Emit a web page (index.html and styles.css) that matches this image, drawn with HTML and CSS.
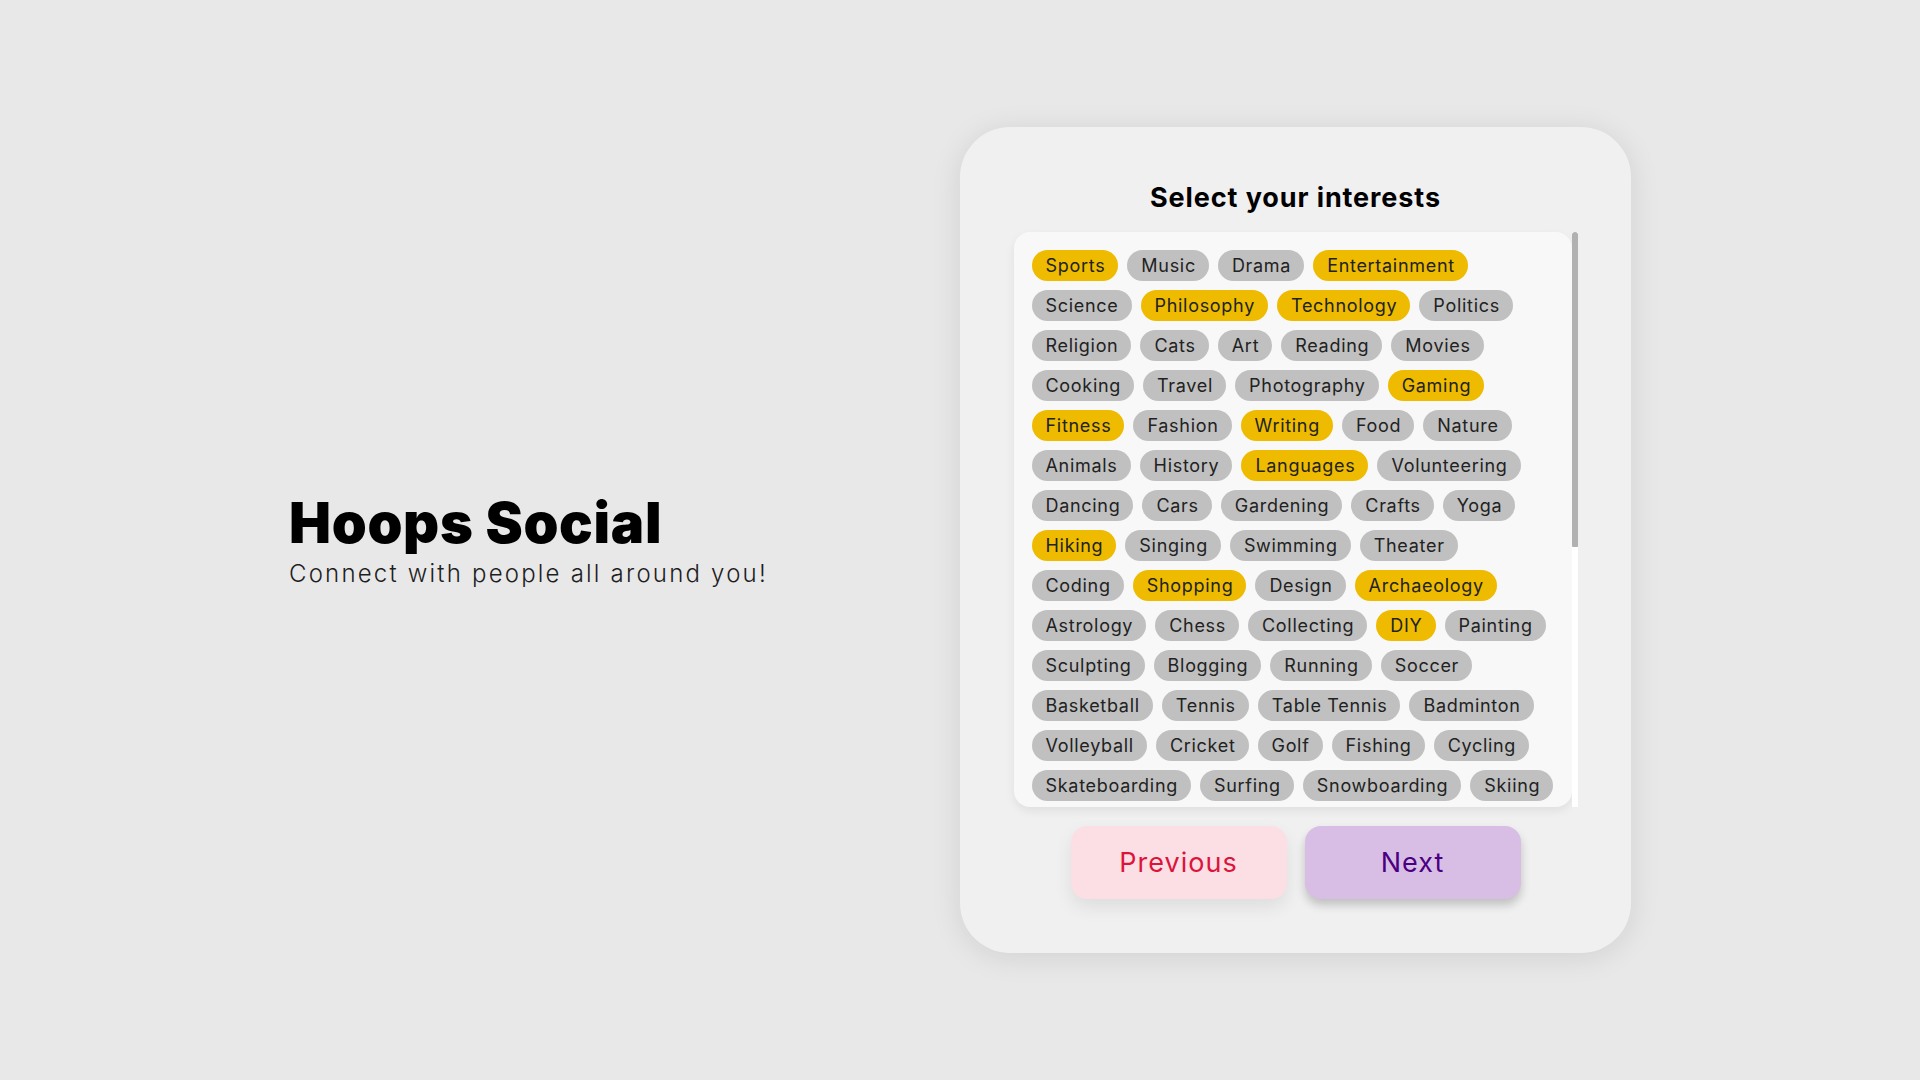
FILE: index.html
```html
<!DOCTYPE html>
<html lang="en">
<head>
<meta charset="utf-8">
<title>Hoops Social</title>
<link rel="stylesheet" href="styles.css">
</head>
<body>
<main class="page">
  <section class="intro">
    <h1 class="brand">Hoops Social</h1>
    <p class="tagline">Connect with people all around you!</p>
  </section>

  <section class="card">
    <h2 class="card-title">Select your interests</h2>
    <div class="tag-box">
      <div class="tag-scroll">
        <div class="tag-list">
          <div class="tag-row"><span class="tag on">Sports</span><span class="tag">Music</span><span class="tag">Drama</span><span class="tag on">Entertainment</span></div>
          <div class="tag-row"><span class="tag">Science</span><span class="tag on">Philosophy</span><span class="tag on">Technology</span><span class="tag">Politics</span></div>
          <div class="tag-row"><span class="tag">Religion</span><span class="tag">Cats</span><span class="tag">Art</span><span class="tag">Reading</span><span class="tag">Movies</span></div>
          <div class="tag-row"><span class="tag">Cooking</span><span class="tag">Travel</span><span class="tag">Photography</span><span class="tag on">Gaming</span></div>
          <div class="tag-row"><span class="tag on">Fitness</span><span class="tag">Fashion</span><span class="tag on">Writing</span><span class="tag">Food</span><span class="tag">Nature</span></div>
          <div class="tag-row"><span class="tag">Animals</span><span class="tag">History</span><span class="tag on">Languages</span><span class="tag">Volunteering</span></div>
          <div class="tag-row"><span class="tag">Dancing</span><span class="tag">Cars</span><span class="tag">Gardening</span><span class="tag">Crafts</span><span class="tag">Yoga</span></div>
          <div class="tag-row"><span class="tag on">Hiking</span><span class="tag">Singing</span><span class="tag">Swimming</span><span class="tag">Theater</span></div>
          <div class="tag-row"><span class="tag">Coding</span><span class="tag on">Shopping</span><span class="tag">Design</span><span class="tag on">Archaeology</span></div>
          <div class="tag-row"><span class="tag">Astrology</span><span class="tag">Chess</span><span class="tag">Collecting</span><span class="tag on">DIY</span><span class="tag">Painting</span></div>
          <div class="tag-row"><span class="tag">Sculpting</span><span class="tag">Blogging</span><span class="tag">Running</span><span class="tag">Soccer</span></div>
          <div class="tag-row"><span class="tag">Basketball</span><span class="tag">Tennis</span><span class="tag">Table Tennis</span><span class="tag">Badminton</span></div>
          <div class="tag-row"><span class="tag">Volleyball</span><span class="tag">Cricket</span><span class="tag">Golf</span><span class="tag">Fishing</span><span class="tag">Cycling</span></div>
          <div class="tag-row"><span class="tag">Skateboarding</span><span class="tag">Surfing</span><span class="tag">Snowboarding</span><span class="tag">Skiing</span></div>
        </div>
      </div>
      <div class="scrollbar"><div class="scroll-thumb"></div></div>
    </div>
    <div class="actions">
      <button class="btn btn-prev" type="button"><span>Previous</span></button>
      <button class="btn btn-next" type="button"><span>Next</span></button>
    </div>
  </section>
</main>
</body>
</html>
```

FILE: styles.css
```css
* {
  box-sizing: border-box;
}

html, body {
  margin: 0;
  padding: 0;
}

body {
  background: #e8e8e8;
  font-family: Inter, "Liberation Sans", sans-serif;
  color: #222;
}

.page {
  height: 100vh;
  display: flex;
  align-items: center;
  justify-content: center;
  gap: 191px;
}

.intro {
  width: 480px;
  flex: none;
  white-space: nowrap;
}

.brand {
  margin: 0 0 6px 0;
  font-size: 56px;
  line-height: 60px;
  font-weight: 900;
  letter-spacing: 0.7px;
  color: #000;
}

.tagline {
  margin: 0;
  font-size: 24px;
  line-height: 29px;
  font-weight: 300;
  letter-spacing: 2.2px;
  color: #1e1e1e;
}

.card {
  width: 671px;
  flex: none;
  background: #f0f0f0;
  border-radius: 50px;
  padding: 55px 54px 54px 54px;
  box-shadow: 0 4px 30px rgba(0, 0, 0, 0.1);
  display: flex;
  flex-direction: column;
  align-items: center;
}

.card-title {
  margin: 0 0 18px 0;
  font-size: 27px;
  line-height: 32px;
  font-weight: 700;
  letter-spacing: 0.9px;
  color: #000;
}

.tag-box {
  width: 564px;
  height: 575px;
  display: flex;
}

.tag-scroll {
  flex: 1;
  overflow: hidden;
  background: #f8f8f8;
  border-radius: 16px;
  box-shadow: 0 4px 10px rgba(0, 0, 0, 0.07);
  padding: 18px;
}

.scrollbar {
  width: 6px;
  flex: none;
  background: #ffffff;
}

.scroll-thumb {
  height: 315px;
  background: #b1b1b1;
  border-radius: 3px 3px 1px 1px;
}

.tag-list {
  display: flex;
  flex-direction: column;
  gap: 9px;
}

.tag-row {
  display: flex;
  gap: 9px;
}

.tag {
  display: block;
  height: 31px;
  line-height: 31px;
  padding: 0 13px 0 14px;
  border-radius: 16px;
  background: #c0c0c0;
  font-size: 18px;
  font-weight: 400;
  letter-spacing: 0.7px;
  color: #222;
  white-space: nowrap;
}

.tag.on {
  background: #eebb00;
}

.actions {
  margin-top: 19px;
  display: flex;
  gap: 18px;
  justify-content: center;
}

.btn {
  width: 216px;
  height: 73px;
  padding: 0;
  border: none;
  border-radius: 16px;
  font-family: Inter, "Liberation Sans", sans-serif;
  font-size: 27px;
  font-weight: 400;
  letter-spacing: 1px;
  cursor: pointer;
  display: flex;
  align-items: center;
  justify-content: center;
}

.btn-prev {
  background: #fcdfe5;
  color: #dc143c;
  box-shadow: 0 8px 18px rgba(0, 0, 0, 0.08);
}

.btn-next {
  background: #d8bee4;
  color: #4b0082;
  box-shadow: 0 6px 10px rgba(0, 0, 0, 0.2);
}
```
